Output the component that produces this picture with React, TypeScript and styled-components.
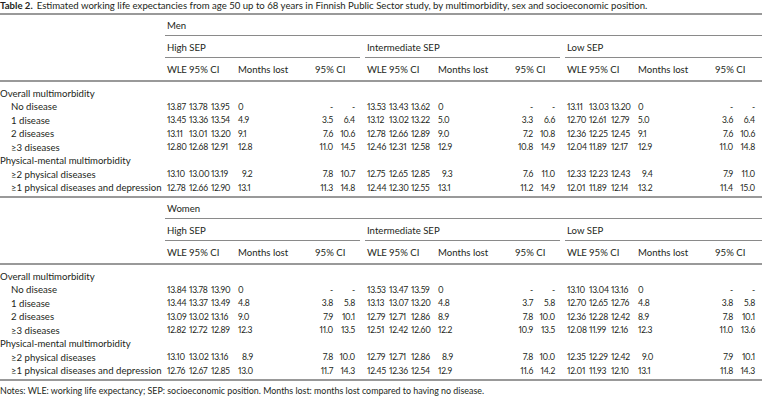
import { Fragment } from 'react';
import styled, { createGlobalStyle } from 'styled-components';

const GlobalStyle = createGlobalStyle`
  html, body {
    margin: 0;
    padding: 0;
    background: #ffffff;
  }
  body {
    font-family: Lato, "Open Sans", sans-serif;
    color: #231f20;
  }
`;

const GROUP = '22px 22px 27px 74px 21px 22px';
const COLUMNS = `167px ${GROUP} 12px ${GROUP} 12px ${GROUP} 7px`;

const Page = styled.div`
  width: 762px;
  height: 400px;
  overflow: hidden;
  font-size: 9.6px;
  line-height: 1;
`;

const Caption = styled.div`
  height: 15px;
  box-sizing: border-box;
  padding-top: 1px;
  border-bottom: 2px solid #999999;
  white-space: nowrap;

  strong {
    font-weight: 700;
    margin-right: 4px;
  }
`;

const HeadRow = styled.div<{ $rule?: boolean; $h: number }>`
  display: grid;
  grid-template-columns: ${COLUMNS};
  height: ${(p) => p.$h}px;
  border-bottom: ${(p) => (p.$rule ? '2px solid #999999' : 'none')};
`;

const HeadCell = styled.div<{ $span: number; $rule?: boolean; $trim?: number; $tight?: boolean; $pad?: number }>`
  grid-column: span ${(p) => p.$span};
  display: flex;
  align-items: center;
  padding-top: 2px;
  white-space: nowrap;
  letter-spacing: ${(p) => (p.$tight ? '-0.3px' : 'normal')};
  border-bottom: ${(p) => (p.$rule ? '1px solid #8a8a8a' : 'none')};
  margin-left: ${(p) => (p.$rule ? -2 : 0)}px;
  padding-left: ${(p) => (p.$rule ? 2 : p.$pad ?? 0)}px;
  margin-right: ${(p) => p.$trim ?? 0}px;
`;

const Body = styled.div`
  padding: 5px 0 1px;
  border-bottom: 2px solid #999999;
`;

const DataRow = styled.div`
  display: grid;
  grid-template-columns: ${COLUMNS};
  height: 13.5px;
  align-items: center;
  white-space: nowrap;
`;

const Label = styled.div<{ $indent?: boolean }>`
  padding-left: ${(p) => (p.$indent ? 11 : 0)}px;
`;

const Value = styled.div<{ $right?: boolean; $pad?: number }>`
  font-size: 8.6px;
  letter-spacing: -0.25px;
  font-variant-numeric: proportional-nums;
  text-align: ${(p) => (p.$right ? 'right' : 'left')};
  padding-left: ${(p) => p.$pad ?? 0}px;
`;

const Notes = styled.div`
  padding-top: 6px;
  font-size: 8.9px;
  white-space: nowrap;
`;

type Group = [string, string, string, string, string, string];
type Item = { label: string; groups: [Group, Group, Group]; decimal?: boolean };
type Section = { title: string; items: Item[] };

const men: Section[] = [
  {
    title: 'Overall multimorbidity',
    items: [
      {
        label: 'No disease',
        groups: [
          ['13.87', '13.78', '13.95', '0', '-', '-'],
          ['13.53', '13.43', '13.62', '0', '-', '-'],
          ['13.11', '13.03', '13.20', '0', '-', '-'],
        ],
      },
      {
        label: '1 disease',
        groups: [
          ['13.45', '13.36', '13.54', '4.9', '3.5', '6.4'],
          ['13.12', '13.02', '13.22', '5.0', '3.3', '6.6'],
          ['12.70', '12.61', '12.79', '5.0', '3.6', '6.4'],
        ],
      },
      {
        label: '2 diseases',
        groups: [
          ['13.11', '13.01', '13.20', '9.1', '7.6', '10.6'],
          ['12.78', '12.66', '12.89', '9.0', '7.2', '10.8'],
          ['12.36', '12.25', '12.45', '9.1', '7.6', '10.6'],
        ],
      },
      {
        label: '≥3 diseases',
        groups: [
          ['12.80', '12.68', '12.91', '12.8', '11.0', '14.5'],
          ['12.46', '12.31', '12.58', '12.9', '10.8', '14.9'],
          ['12.04', '11.89', '12.17', '12.9', '11.0', '14.8'],
        ],
      },
    ],
  },
  {
    title: 'Physical-mental multimorbidity',
    items: [
      {
        label: '≥2 physical diseases',
        decimal: true,
        groups: [
          ['13.10', '13.00', '13.19', '9.2', '7.8', '10.7'],
          ['12.75', '12.65', '12.85', '9.3', '7.6', '11.0'],
          ['12.33', '12.23', '12.43', '9.4', '7.9', '11.0'],
        ],
      },
      {
        label: '≥1 physical diseases and depression',
        groups: [
          ['12.78', '12.66', '12.90', '13.1', '11.3', '14.8'],
          ['12.44', '12.30', '12.55', '13.1', '11.2', '14.9'],
          ['12.01', '11.89', '12.14', '13.2', '11.4', '15.0'],
        ],
      },
    ],
  },
];

const women: Section[] = [
  {
    title: 'Overall multimorbidity',
    items: [
      {
        label: 'No disease',
        groups: [
          ['13.84', '13.78', '13.90', '0', '-', '-'],
          ['13.53', '13.47', '13.59', '0', '-', '-'],
          ['13.10', '13.04', '13.16', '0', '-', '-'],
        ],
      },
      {
        label: '1 disease',
        groups: [
          ['13.44', '13.37', '13.49', '4.8', '3.8', '5.8'],
          ['13.13', '13.07', '13.20', '4.8', '3.7', '5.8'],
          ['12.70', '12.65', '12.76', '4.8', '3.8', '5.8'],
        ],
      },
      {
        label: '2 diseases',
        groups: [
          ['13.09', '13.02', '13.16', '9.0', '7.9', '10.1'],
          ['12.79', '12.71', '12.86', '8.9', '7.8', '10.0'],
          ['12.36', '12.28', '12.42', '8.9', '7.8', '10.1'],
        ],
      },
      {
        label: '≥3 diseases',
        groups: [
          ['12.82', '12.72', '12.89', '12.3', '11.0', '13.5'],
          ['12.51', '12.42', '12.60', '12.2', '10.9', '13.5'],
          ['12.08', '11.99', '12.16', '12.3', '11.0', '13.6'],
        ],
      },
    ],
  },
  {
    title: 'Physical-mental multimorbidity',
    items: [
      {
        label: '≥2 physical diseases',
        decimal: true,
        groups: [
          ['13.10', '13.02', '13.16', '8.9', '7.8', '10.0'],
          ['12.79', '12.71', '12.86', '8.9', '7.8', '10.0'],
          ['12.35', '12.29', '12.42', '9.0', '7.9', '10.1'],
        ],
      },
      {
        label: '≥1 physical diseases and depression',
        groups: [
          ['12.76', '12.67', '12.85', '13.0', '11.7', '14.3'],
          ['12.45', '12.36', '12.54', '12.9', '11.6', '14.2'],
          ['12.01', '11.93', '12.10', '13.1', '11.8', '14.3'],
        ],
      },
    ],
  },
];

const SEPS = ['High SEP', 'Intermediate SEP', 'Low SEP'];

const Header = ({ sex }: { sex: string }) => (
  <>
    <HeadRow $h={21}>
      <HeadCell $span={1} />
      <HeadCell $span={21} $rule>
        {sex}
      </HeadCell>
    </HeadRow>
    <HeadRow $h={22}>
      <HeadCell $span={1} />
      {SEPS.map((s, i) => (
        <HeadCell key={s} $span={7} $rule $trim={i < 2 ? 7 : 0}>
          {s}
        </HeadCell>
      ))}
    </HeadRow>
    <HeadRow $h={22} $rule>
      <HeadCell $span={1} />
      {SEPS.map((s) => (
        <Fragment key={s}>
          <HeadCell $span={1} $tight>
            WLE
          </HeadCell>
          <HeadCell $span={2}>95% CI</HeadCell>
          <HeadCell $span={1}>Months lost</HeadCell>
          <HeadCell $span={3} $pad={3}>
            95% CI
          </HeadCell>
        </Fragment>
      ))}
    </HeadRow>
  </>
);

const Block = ({ sex, sections }: { sex: string; sections: Section[] }) => (
  <>
    <Header sex={sex} />
    <Body>
      {sections.map((sec) => (
        <div key={sec.title}>
          <DataRow>
            <Label>{sec.title}</Label>
          </DataRow>
          {sec.items.map((it) => (
            <DataRow key={it.label}>
              <Label $indent>{it.label}</Label>
              {it.groups.map((g, gi) => (
                <Fragment key={gi}>
                  <Value>{g[0]}</Value>
                  <Value>{g[1]}</Value>
                  <Value>{g[2]}</Value>
                  <Value $pad={it.decimal && g[3].length < 4 ? 4 : 0}>{g[3]}</Value>
                  <Value $right>{g[4]}</Value>
                  <Value $right>{g[5]}</Value>
                  <span />
                </Fragment>
              ))}
            </DataRow>
          ))}
        </div>
      ))}
    </Body>
  </>
);

const App = () => {
  return (
    <>
      <GlobalStyle />
      <Page>
        <Caption>
          <strong>Table 2.</strong>
          Estimated working life expectancies from age 50 up to 68 years in Finnish Public Sector study, by
          multimorbidity, sex and socioeconomic position.
        </Caption>
        <Block sex="Men" sections={men} />
        <Block sex="Women" sections={women} />
        <Notes>
          Notes: WLE: working life expectancy; SEP: socioeconomic position. Months lost: months lost compared to
          having no disease.
        </Notes>
      </Page>
    </>
  );
};

export default App;
